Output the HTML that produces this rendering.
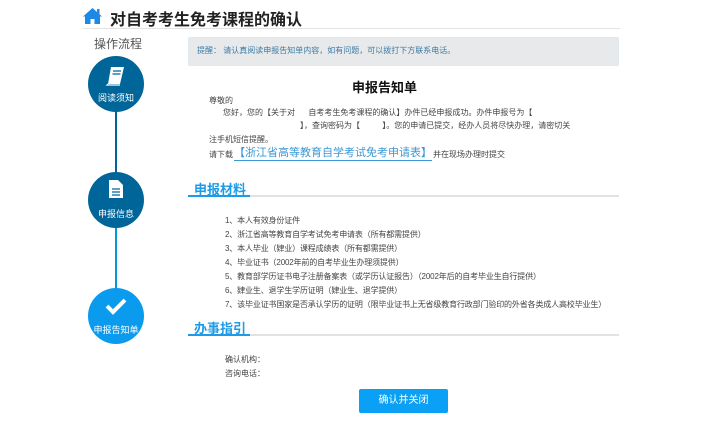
<!DOCTYPE html>
<html><head><meta charset="utf-8"><style>
*{margin:0;padding:0;box-sizing:border-box}
body{width:702px;height:448px;background:#fff;position:relative;overflow:hidden;font-family:"Liberation Sans","Noto Sans CJK SC",sans-serif;color:#333}
.a{position:absolute;white-space:nowrap}
.s{font-size:8px;color:#444;line-height:10px}
.c{position:absolute;width:56px;height:56px;border-radius:50%;left:88px;color:#fff;font-size:9px;text-align:center}
.c span{position:absolute;left:0;right:0;top:35px}
.h{font-size:13px;font-weight:bold;color:#1e9be8}
</style></head><body>
<svg class="a" style="left:82px;top:7px" width="21" height="18" viewBox="0 0 21 18"><path d="M10.5 1 L1 9.5 L3 9.5 L3 17 L8.5 17 L8.5 12 L12.5 12 L12.5 17 L18 17 L18 9.5 L20 9.5 Z" fill="#1e88e5"/><rect x="15" y="2" width="2.5" height="5" fill="#1e88e5"/></svg>
<div class="a" style="left:110px;top:6px;font-size:16px;font-weight:bold;color:#222">对自考考生免考课程的确认</div>
<div class="a" style="left:83px;top:28px;width:537px;height:1px;background:#e2e2e2"></div>
<div class="a" style="left:94px;top:35px;font-size:12px;color:#555">操作流程</div>
<div class="a" style="left:115px;top:111px;width:2px;height:62px;background:#006699"></div>
<div class="a" style="left:115px;top:227px;width:2px;height:62px;background:#0a97d8"></div>
<div class="c" style="top:56px;background:#00669a"><svg style="position:absolute;left:17px;top:9px" width="22" height="22" viewBox="0 0 22 22"><path d="M6 2 H19 L15 19 H3 Z" fill="#fff"/><path d="M8 6 H16 M7.5 9 H15.5" stroke="#00669a" stroke-width="1.3"/><path d="M3 19 L2 20 H15" stroke="#fff" stroke-width="1.2" fill="none"/></svg><span>阅读须知</span></div>
<div class="c" style="top:172px;background:#00669a"><svg style="position:absolute;left:20px;top:7px" width="16" height="20" viewBox="0 0 16 20"><path d="M1 1 H10 L15 6 V19 H1 Z" fill="#fff"/><path d="M4 10 H12 M4 13 H12 M4 16 H12" stroke="#00669a" stroke-width="1.3"/></svg><span>申报信息</span></div>
<div class="c" style="top:288px;background:#0a9bef"><svg style="position:absolute;left:16px;top:8px" width="24" height="20" viewBox="0 0 24 20"><path d="M3 10 L9 16 L21 4" stroke="#fff" stroke-width="4" fill="none"/></svg><span>申报告知单</span></div>
<div class="a" style="left:188px;top:37px;width:431px;height:29px;background:#e8e9ea;border:1px solid #dde8f0;border-radius:2px"></div>
<div class="a s" style="left:197px;top:46px;color:#3b7ca6">提醒： 请认真阅读申报告知单内容，如有问题，可以拨打下方联系电话。</div>
<div class="a" style="left:352px;top:77px;font-size:13px;font-weight:bold;color:#111">申报告知单</div>
<div class="a s" style="left:209px;top:96px">尊敬的</div>
<div class="a s" style="left:223px;top:108px">您好，您的【关于对&nbsp;&nbsp;&nbsp;&nbsp;&nbsp;&nbsp;自考考生免考课程的确认】办件已经申报成功。办件申报号为【</div>
<div class="a s" style="left:300px;top:121px">】，查询密码为【&nbsp;&nbsp;&nbsp;&nbsp;&nbsp;&nbsp;&nbsp;&nbsp;&nbsp;&nbsp;】。您的申请已提交，经办人员将尽快办理，请密切关</div>
<div class="a s" style="left:209px;top:135px">注手机短信提醒。</div>
<div class="a s" style="left:209px;top:150px">请下载</div>
<div class="a" style="left:234px;top:146px;font-size:11px;color:#3a98d6;border-bottom:1px solid #3a98d6;line-height:14px">【浙江省高等教育自学考试免考申请表】</div>
<div class="a s" style="left:433px;top:150px">并在现场办理时提交</div>
<div class="a h" style="left:194px;top:179px">申报材料</div>
<div class="a" style="left:188px;top:195px;width:431px;height:2px;background:#e2e2e2"></div>
<div class="a" style="left:188px;top:195px;width:62px;height:2px;background:#1e9be8"></div>
<div class="a s" style="left:225px;top:214px;line-height:14px;letter-spacing:-0.15px">1、本人有效身份证件<br>2、浙江省高等教育自学考试免考申请表（所有都需提供）<br>3、本人毕业（肄业）课程成绩表（所有都需提供）<br>4、毕业证书（2002年前的自考毕业生办理须提供）<br>5、教育部学历证书电子注册备案表（或学历认证报告）（2002年后的自考毕业生自行提供）<br>6、肄业生、退学生学历证明（肄业生、退学提供）<br>7、该毕业证书国家是否承认学历的证明（限毕业证书上无省级教育行政部门验印的外省各类成人高校毕业生）</div>
<div class="a h" style="left:194px;top:318px">办事指引</div>
<div class="a" style="left:188px;top:334px;width:431px;height:2px;background:#e2e2e2"></div>
<div class="a" style="left:188px;top:334px;width:62px;height:2px;background:#1e9be8"></div>
<div class="a s" style="left:225px;top:353px;line-height:14px">确认机构：<br>咨询电话：</div>
<div class="a" style="left:359px;top:389px;width:89px;height:24px;background:#0aa0f5;border-radius:2px;color:#fff;font-size:10px;text-align:center;line-height:24px">确认并关闭</div>
</body></html>
